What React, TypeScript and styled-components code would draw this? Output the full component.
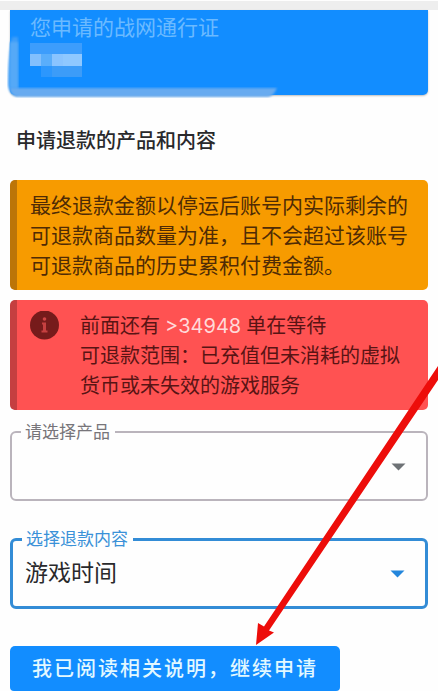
import React from "react";
import styled, { createGlobalStyle } from "styled-components";

const GlobalStyle = createGlobalStyle`
  *, *::before, *::after { box-sizing: border-box; }
  body {
    margin: 0;
    background: #fefefe;
    color: #29292b;
    font-family: Roboto, "Noto Sans CJK SC", sans-serif;
  }
`;

const Page = styled.main`
  position: relative;
  overflow: hidden;
`;

const TopStrip = styled.div`
  height: 10px;
  background: #eeeeee;
  border-top: 1px solid #fefefe;
`;

const Content = styled.div`
  display: flex;
  flex-direction: column;
  padding: 0 10px;
`;

const AccountCard = styled.section`
  position: relative;
  height: 85px;
  padding: 3px 20px;
  border-radius: 0 0 5px 5px;
  background: #128dff;
  box-shadow: 0 1px 2px #00000040;
`;

const AccountLabel = styled.p`
  position: relative;
  z-index: 1;
  margin: 0;
  font-size: 21px;
  line-height: 30px;
  color: #6bbaff;
`;

const Mosaic = styled.svg`
  display: block;
  position: relative;
  z-index: 1;
`;

const Smear = styled.svg`
  position: absolute;
  left: -4px;
  top: 22px;
`;

const Heading = styled.h1`
  margin: 31px 6px 24px;
  font-size: 20px;
  line-height: 30px;
  font-weight: 500;
`;

const tones = {
  warning: { fill: "#f79b00", edge: "#bc7508", text: "#4f2b05" },
  error: { fill: "#ff5252", edge: "#c53f40", text: "#591414" },
};

const Alert = styled.section<{ $tone: keyof typeof tones; $size: number }>`
  display: flex;
  gap: 20px;
  min-height: 110px;
  margin-bottom: 10px;
  padding: 11px 12px 9px 13px;
  border-left: 7px solid ${(p) => tones[p.$tone].edge};
  border-radius: 5px;
  background: ${(p) => tones[p.$tone].fill};
  color: ${(p) => tones[p.$tone].text};
  font-size: ${(p) => p.$size}px;
  line-height: 30px;
`;

const AlertText = styled.p`
  flex: 1;
  margin: 0;
`;

const Count = styled.span`
  color: #ffd9d9;
  font-family: Inter, sans-serif;
`;

const Field = styled.fieldset<{ $active?: boolean }>`
  position: relative;
  min-width: 0;
  margin: ${(p) => (p.$active ? "0 0 37px" : "1px 0 27px")};
  padding: 0;
  border: ${(p) => (p.$active ? "3px solid #338cd6" : "2px solid #bab4bc")};
  border-radius: 6px;
  color: ${(p) => (p.$active ? "#3a91d8" : "#77757a")};
`;

const Legend = styled.legend`
  margin-left: 9px;
  padding: 0 5px 0 4px;
  font-size: 17px;
  line-height: 22px;
`;

const Select = styled.select`
  display: block;
  width: 100%;
  height: 56px;
  padding: 0 48px 10px 12px;
  border: 0;
  outline: 0;
  appearance: none;
  background: transparent;
  color: #29292b;
  font-family: inherit;
  font-size: 23px;
`;

const Caret = styled.svg`
  position: absolute;
  right: 20px;
  bottom: 28px;
  pointer-events: none;
`;

const Submit = styled.button`
  align-self: flex-start;
  height: 45px;
  padding: 0 22px;
  border: 0;
  border-radius: 5px 5px 4px 4px;
  background: #128dff;
  color: #e2f8ff;
  font-family: inherit;
  font-size: 20px;
  font-weight: 500;
  line-height: 30px;
  letter-spacing: 2px;
  white-space: nowrap;
`;

const Pointer = styled.svg`
  position: absolute;
  right: 0;
  top: 365px;
  pointer-events: none;
`;

const mosaicCells = [
  [0, 0, 52, 11, "#3d9dfc"],
  [0, 11, 11, 12, "#82bffd"],
  [11, 11, 11, 12, "#5aaefb"],
  [22, 11, 11, 12, "#8ac4ff"],
  [33, 11, 19, 12, "#8fc8ff"],
  [11, 23, 11, 11, "#2c97fd"],
  [22, 23, 30, 11, "#3c9cf8"],
] as const;

type OutlinedSelectProps = {
  id: string;
  label: string;
  options: string[];
  active?: boolean;
};

function OutlinedSelect({ id, label, options, active }: OutlinedSelectProps) {
  return (
    <Field $active={active}>
      <Legend>
        <label htmlFor={id}>{label}</label>
      </Legend>
      <Select id={id} defaultValue={options[0]}>
        {options.map((o) => (
          <option key={o} value={o}>
            {o}
          </option>
        ))}
      </Select>
      <Caret width="15" height="8" viewBox="0 0 15 8" aria-hidden="true">
        <path d="M0.5 0.5h14L7.5 7.5z" fill={active ? "#2386dc" : "#6e7276"} />
      </Caret>
    </Field>
  );
}

export default function App() {
  return (
    <>
      <GlobalStyle />
      <Page>
        <TopStrip />
        <Content>
          <AccountCard>
            <Smear width="276" height="68" viewBox="0 0 276 68" aria-hidden="true">
              <defs>
                <filter id="soft" x="-5%" y="-5%" width="110%" height="110%">
                  <feGaussianBlur stdDeviation="1" />
                </filter>
              </defs>
              <path
                d="M6 5C3 18 2 36 2 52c0 6 3 11 10 12V56H12V5z"
                fill="#3c9df8"
                filter="url(#soft)"
              />
              <path d="M4 10h8v46H4z" fill="#55a9f7" filter="url(#soft)" />
              <path
                d="M4 56h267c-2 3-3 8-9 9H14C8 65 5 62 4 56z"
                fill="#68abf0"
                filter="url(#soft)"
              />
            </Smear>
            <AccountLabel>您申请的战网通行证</AccountLabel>
            <Mosaic width="52" height="34" viewBox="0 0 52 34" aria-hidden="true">
              {mosaicCells.map(([x, y, w, h, fill]) => (
                <rect key={`${x}-${y}`} x={x} y={y} width={w} height={h} fill={fill} />
              ))}
            </Mosaic>
          </AccountCard>

          <Heading>申请退款的产品和内容</Heading>

          <Alert $tone="warning" $size={21}>
            <AlertText>
              最终退款金额以停运后账号内实际剩余的可退款商品数量为准，且不会超过该账号可退款商品的历史累积付费金额。
            </AlertText>
          </Alert>

          <Alert $tone="error" $size={20}>
            <svg width="30" height="30" viewBox="0 0 30 30" aria-hidden="true">
              <circle cx="14.5" cy="14" r="14.5" fill="#761b1b" />
              <circle cx="14.5" cy="8" r="1.8" fill="#d04545" />
              <path d="M12 11.500h4v8h1.500v2h-6v-2H13v-6h-1z" fill="#c64040" />
            </svg>
            <AlertText>
              前面还有 <Count>&gt;34948</Count> 单在等待
              <br />
              可退款范围：已充值但未消耗的虚拟
              <br />
              货币或未失效的游戏服务
            </AlertText>
          </Alert>

          <OutlinedSelect id="product" label="请选择产品" options={[""]} />
          <OutlinedSelect id="refund" label="选择退款内容" options={["游戏时间"]} active />

          <Submit type="button">我已阅读相关说明，继续申请</Submit>
        </Content>

        <Pointer width="184" height="280" viewBox="0 0 184 280" aria-hidden="true">
          <path d="M2 280L4 258L10 261.500L184 1V15L15 265.500L20 267.500z" fill="#ed0d0a" />
        </Pointer>
      </Page>
    </>
  );
}
